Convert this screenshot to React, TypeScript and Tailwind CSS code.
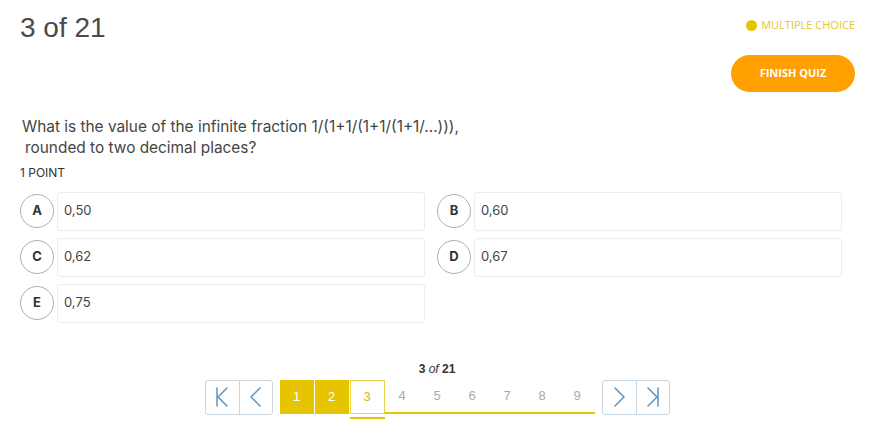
import React from 'react';

const options = [
  { key: 'A', value: '0,50' },
  { key: 'B', value: '0,60' },
  { key: 'C', value: '0,62' },
  { key: 'D', value: '0,67' },
  { key: 'E', value: '0,75' },
];

function NavIcon({ kind }: { kind: 'first' | 'prev' | 'next' | 'last' }) {
  return (
    <svg width="20" height="22" viewBox="0 0 20 22" fill="none" stroke="#5b93c2" strokeWidth="1.5" strokeLinecap="round" strokeLinejoin="round">
      {kind === 'first' && (
        <>
          <path d="M5 2v18" />
          <path d="M15 2L6 11l9 9" />
        </>
      )}
      {kind === 'prev' && <path d="M14 2L5 11l9 9" />}
      {kind === 'next' && <path d="M6 2l9 9-9 9" />}
      {kind === 'last' && (
        <>
          <path d="M5 2l9 9-9 9" />
          <path d="M15 2v18" />
        </>
      )}
    </svg>
  );
}

function NavGroup({ left, right }: { left: 'first' | 'next'; right: 'prev' | 'last' }) {
  return (
    <div className="flex h-[35px] rounded-[3px] border border-[#c9d7e2] bg-white">
      <button className="flex w-[34px] items-center justify-center border-r border-[#c9d7e2]">
        <NavIcon kind={left} />
      </button>
      <button className="flex w-[32px] items-center justify-center">
        <NavIcon kind={right} />
      </button>
    </div>
  );
}

export default function App() {
  const pages = [1, 2, 3, 4, 5, 6, 7, 8, 9];
  const current = 3;

  return (
    <div className="h-[421px] w-[886px] bg-white font-['Inter',sans-serif] text-[#444]">
      <div className="w-[874px]">
        {/* header */}
        <div className="flex items-start justify-between pl-5 pr-[19px] pt-[11px]">
          <h1 className="font-['Liberation_Sans',Arial,sans-serif] text-[28px] leading-[34px] text-[#4a4a4a]">3 of 21</h1>
          <div className="flex flex-col items-end">
            <div className="mt-[6px] flex items-center gap-[4px]">
              <span className="h-[11px] w-[11px] rounded-full bg-[#e3c300]" />
              <span className="font-['Open_Sans',sans-serif] text-[11px] text-[#e6c42a]">MULTIPLE CHOICE</span>
            </div>
            <button className="mt-[21px] h-[37px] w-[124px] rounded-full bg-[#ffa000] font-['Open_Sans',sans-serif] text-[11px] font-bold text-white">
              FINISH QUIZ
            </button>
          </div>
        </div>

        {/* question */}
        <div className="mt-[24px] pl-[22px] text-[15.4px] leading-[21px] text-[#454545]">
          <p>What is the value of the infinite fraction 1/(1+1/(1+1/(1+1/...))),</p>
          <p className="pl-[3px]">rounded to two decimal places?</p>
        </div>
        <div className="mt-[7px] pl-5 text-[12px] leading-[16px] text-[#333]">1 POINT</div>

        {/* options */}
        <div className="ml-5 mt-[11px] grid w-[822px] grid-cols-2 gap-x-[12px] gap-y-[7px]">
          {options.map((o) => (
            <div key={o.key} className="flex items-center">
              <div className="flex h-[34px] w-[34px] shrink-0 items-center justify-center rounded-full border border-[#b0b0b0] bg-white text-[13px] font-bold text-[#333]">
                {o.key}
              </div>
              <div className="ml-[3px] flex h-[39px] flex-1 items-center rounded-[3px] border border-[#ececec] pl-[6px] text-[13px] text-[#444]">
                {o.value}
              </div>
            </div>
          ))}
        </div>

        {/* pagination */}
        <div className="mt-[39px] flex flex-col items-center">
          <div className="font-['Liberation_Sans',Arial,sans-serif] text-[12px] leading-[14px] text-[#333]">
            <span className="font-bold">3</span> <span className="italic">of</span> <span className="font-bold">21</span>
          </div>
          <div className="mt-[4px] flex items-start">
            <NavGroup left="first" right="prev" />
            <div className="ml-[7px] flex">
              {pages.map((p) => {
                if (p < current) {
                  return (
                    <div key={p} className="mr-px flex h-[34px] w-[34px] items-center justify-center bg-[#e6c400] font-['Liberation_Sans',Arial,sans-serif] text-[13px] text-white">
                      {p}
                    </div>
                  );
                }
                if (p === current) {
                  return (
                    <div key={p} className="flex w-[35px] flex-col">
                      <div className="flex h-[34px] items-center justify-center border border-[#ecd04a] font-['Liberation_Sans',Arial,sans-serif] text-[13px] text-[#e0b800]">
                        {p}
                      </div>
                      <div className="mt-[3px] h-[2px] bg-[#e6c400]" />
                    </div>
                  );
                }
                return (
                  <div key={p} className="flex h-[34px] w-[35px] items-center justify-center border-b-2 border-[#e6c400] font-['Liberation_Sans',Arial,sans-serif] text-[13px] text-[#aaa]">
                    {p}
                  </div>
                );
              })}
            </div>
            <div className="ml-[7px]">
              <NavGroup left="next" right="last" />
            </div>
          </div>
        </div>
      </div>
    </div>
  );
}
